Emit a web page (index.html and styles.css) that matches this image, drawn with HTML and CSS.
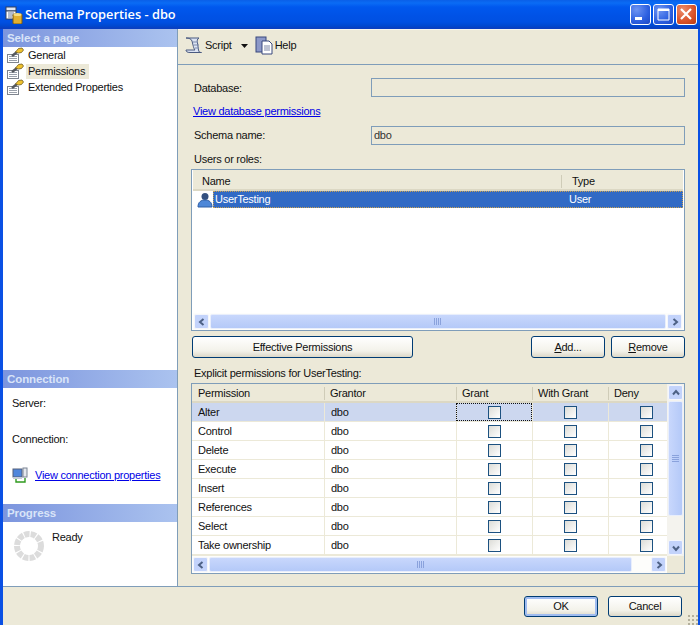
FILE: index.html
```html
<!DOCTYPE html>
<html lang="en">
<head>
<meta charset="utf-8">
<title>Schema Properties - dbo</title>
<link rel="stylesheet" href="styles.css">
</head>
<body>
<div class="window">
  <header class="titlebar">
    <svg class="app-icon" width="18" height="18" viewBox="0 0 18 18"><rect x="1" y="1" width="10" height="4" fill="#dfe7f5" stroke="#33415c"/><rect x="1" y="5" width="10" height="8" fill="#fff" stroke="#33415c"/><path d="M3 7h6M3 9h6M3 11h4" stroke="#6a7a9a"/><rect x="8" y="8" width="9" height="10" rx="1" fill="#e2b030" stroke="#7a5a10"/><ellipse cx="12.500" cy="8.500" rx="4" ry="1.500" fill="#f6dd80"/></svg>
    <span class="title-text">Schema Properties - dbo</span>
    <div class="caption-buttons">
      <span class="cap cap-blue"><svg width="21" height="21" viewBox="0 0 21 21"><rect x="5" y="13" width="7" height="3" fill="#fff"/></svg></span>
      <span class="cap cap-blue"><svg width="21" height="21" viewBox="0 0 21 21"><path d="M5 5h11v11H5z" fill="none" stroke="#fff"/><rect x="5" y="5" width="11" height="2" fill="#fff"/></svg></span>
      <span class="cap cap-red"><svg width="21" height="21" viewBox="0 0 21 21"><path d="M5 5l10 10M15 5L5 15" stroke="#fff" stroke-width="2.200"/></svg></span>
    </div>
  </header>

  <div class="frame">
    <div class="panes">
      <aside class="sidebar">
        <h2 class="side-head">Select a page</h2>
        <ul class="nav">
          <li class="nav-item"><svg class="page-icon" width="18" height="16" viewBox="0 0 18 16"><use href="#wrench-page"/></svg><span class="nav-label">General</span></li>
          <li class="nav-item"><svg class="page-icon" width="18" height="16" viewBox="0 0 18 16"><use href="#wrench-page"/></svg><span class="nav-label nav-active">Permissions</span></li>
          <li class="nav-item"><svg class="page-icon" width="18" height="16" viewBox="0 0 18 16"><use href="#wrench-page"/></svg><span class="nav-label">Extended Properties</span></li>
        </ul>
        <div class="side-spacer"></div>
        <h2 class="side-head">Connection</h2>
        <div class="conn">
          <div class="conn-line">Server:</div>
          <div class="conn-line conn-second">Connection:</div>
          <div class="conn-link">
            <svg width="16" height="16" viewBox="0 0 16 16"><rect x="1" y="2" width="9" height="8" fill="#4f86dc" stroke="#55617a"/><rect x="1" y="10" width="9" height="2" fill="#c5ccd8"/><rect x="11" y="1" width="4" height="9" fill="#e6e9ee" stroke="#7b8494"/><path d="M4 12v3h9v-4" fill="none" stroke="#2f9a1e" stroke-width="1.400"/></svg>
            <a class="link" href="#">View connection properties</a>
          </div>
        </div>
        <h2 class="side-head">Progress</h2>
        <div class="progress">
          <svg width="32" height="32" viewBox="0 0 32 32" class="spinner">
            <circle cx="16" cy="16" r="12" fill="none" stroke="#dcdcdc" stroke-width="6" stroke-dasharray="5.300 1.130"/>
          </svg>
          <span class="ready">Ready</span>
        </div>
      </aside>

      <main class="main">
        <div class="toolbar">
          <span class="tool">
            <svg width="18" height="20" viewBox="0 0 18 20"><path d="M1 2h13c-2 1-2 3-1.500 5l1 7c.3 2 1.500 2.500 3 2.500H5c-3 0-4-1-4-2.500h9c-1-1-1.500-3-2-5L7 5C6.500 3 4 2 1 2z" fill="#dbe3f2" stroke="#4a5a80"/><path d="M8 6h5M9 9h5M10 12h4" stroke="#7c8bad"/></svg>
            <span>Script</span>
          </span>
          <svg class="caret" width="7" height="4" viewBox="0 0 7 4"><path d="M0 0h7L3.500 4z" fill="#111"/></svg>
          <span class="tool">
            <svg width="18" height="20" viewBox="0 0 18 20"><rect x="1" y="1" width="10" height="15" fill="#8c98c8" stroke="#39487c"/><path d="M7 5h7l3 3v10H7z" fill="#fff" stroke="#39487c"/><path d="M9 10h6M9 12h6M9 14h6" stroke="#7e88a8"/></svg>
            <span>Help</span>
          </span>
        </div>

        <div class="form">
          <div class="field">
            <label class="field-label db-label">Database:</label>
            <div class="textbox"></div>
          </div>
          <a class="link db-link" href="#">View database permissions</a>
          <div class="field schema-field">
            <label class="field-label">Schema name:</label>
            <div class="textbox">dbo</div>
          </div>
          <div class="section-label users-label">Users or roles:</div>

          <section class="list">
            <div class="list-head">
              <span class="lh-name">Name</span>
              <span class="lh-type">Type</span>
            </div>
            <div class="list-row">
              <svg class="user-icon" width="16" height="16" viewBox="0 0 16 16"><circle cx="8" cy="4.500" r="3.500" fill="#33507f"/><path d="M1 15c0-5 3-7 7-7s7 2 7 7z" fill="#4d87d8" stroke="#2f5ea5"/></svg>
              <span class="row-selected"><span class="rs-name">UserTesting</span><span class="rs-type">User</span></span>
            </div>
            <div class="list-fill"></div>
            <div class="hscroll">
              <span class="sb-btn"><svg width="8" height="8" viewBox="0 0 8 8"><path d="M5.500 1L2 4l3.500 3" fill="none" stroke="#4d6185" stroke-width="2"/></svg></span>
              <span class="sb-thumb"><span class="grip-h"></span></span>
              <span class="sb-btn"><svg width="8" height="8" viewBox="0 0 8 8"><path d="M2.500 1L6 4 2.500 7" fill="none" stroke="#4d6185" stroke-width="2"/></svg></span>
            </div>
          </section>

          <div class="list-actions">
            <button class="btn btn-effective" type="button">Effective Permissions</button>
            <div class="actions-right">
              <button class="btn btn-small" type="button"><u>A</u>dd...</button>
              <button class="btn btn-small" type="button"><u>R</u>emove</button>
            </div>
          </div>

          <div class="section-label explicit-label">Explicit permissions for UserTesting:</div>

          <section class="grid-box">
            <div class="grid-main">
              <div class="grid-cols grid-head">
                <span>Permission</span><span>Grantor</span><span>Grant</span><span>With Grant</span><span>Deny</span>
              </div>
              <div class="grid-cols grid-row row-current"><span>Alter</span><span>dbo</span><span class="cb-cell cb-focus"><i class="cb"></i></span><span class="cb-cell"><i class="cb"></i></span><span class="cb-cell"><i class="cb"></i></span></div>
              <div class="grid-cols grid-row"><span>Control</span><span>dbo</span><span class="cb-cell"><i class="cb"></i></span><span class="cb-cell"><i class="cb"></i></span><span class="cb-cell"><i class="cb"></i></span></div>
              <div class="grid-cols grid-row"><span>Delete</span><span>dbo</span><span class="cb-cell"><i class="cb"></i></span><span class="cb-cell"><i class="cb"></i></span><span class="cb-cell"><i class="cb"></i></span></div>
              <div class="grid-cols grid-row"><span>Execute</span><span>dbo</span><span class="cb-cell"><i class="cb"></i></span><span class="cb-cell"><i class="cb"></i></span><span class="cb-cell"><i class="cb"></i></span></div>
              <div class="grid-cols grid-row"><span>Insert</span><span>dbo</span><span class="cb-cell"><i class="cb"></i></span><span class="cb-cell"><i class="cb"></i></span><span class="cb-cell"><i class="cb"></i></span></div>
              <div class="grid-cols grid-row"><span>References</span><span>dbo</span><span class="cb-cell"><i class="cb"></i></span><span class="cb-cell"><i class="cb"></i></span><span class="cb-cell"><i class="cb"></i></span></div>
              <div class="grid-cols grid-row"><span>Select</span><span>dbo</span><span class="cb-cell"><i class="cb"></i></span><span class="cb-cell"><i class="cb"></i></span><span class="cb-cell"><i class="cb"></i></span></div>
              <div class="grid-cols grid-row"><span>Take ownership</span><span>dbo</span><span class="cb-cell"><i class="cb"></i></span><span class="cb-cell"><i class="cb"></i></span><span class="cb-cell"><i class="cb"></i></span></div>
            </div>
            <div class="vscroll">
              <span class="sb-btn"><svg width="8" height="8" viewBox="0 0 8 8"><path d="M1 5.500L4 2l3 3.500" fill="none" stroke="#4d6185" stroke-width="2"/></svg></span>
              <span class="sb-thumb-v"><span class="grip-v"></span></span>
              <span class="sb-track-v"></span>
              <span class="sb-btn"><svg width="8" height="8" viewBox="0 0 8 8"><path d="M1 2.500L4 6l3-3.500" fill="none" stroke="#4d6185" stroke-width="2"/></svg></span>
            </div>
            <div class="hscroll hscroll-grid">
              <span class="sb-btn"><svg width="8" height="8" viewBox="0 0 8 8"><path d="M5.500 1L2 4l3.500 3" fill="none" stroke="#4d6185" stroke-width="2"/></svg></span>
              <span class="sb-thumb"><span class="grip-h"></span></span>
              <span class="sb-track-h"></span>
              <span class="sb-btn"><svg width="8" height="8" viewBox="0 0 8 8"><path d="M2.500 1L6 4 2.500 7" fill="none" stroke="#4d6185" stroke-width="2"/></svg></span>
            </div>
          </section>
        </div>
      </main>
    </div>

    <footer class="footer">
      <button class="btn btn-dialog btn-default" type="button">OK</button>
      <button class="btn btn-dialog" type="button">Cancel</button>
      <span class="size-grip"></span>
    </footer>
  </div>
</div>

<svg class="defs" width="0" height="0">
  <defs>
    <g id="wrench-page">
      <rect x="1.500" y="7.500" width="11" height="8" fill="#fff" stroke="#7e848e"/>
      <path d="M3 9.500h8M3 11.500h8M3 13.500h8" stroke="#9aa0aa"/>
      <path d="M6 9l5-4" stroke="#55585e" stroke-width="2.400"/>
      <path d="M9.500 5l3-3.500 3.500-.5 1.500 2-2 2.500-3 .5z" fill="#f0c22e" stroke="#6e5a1e" stroke-width=".8"/>
    </g>
  </defs>
</svg>
</body>
</html>
```
FILE: styles.css
```css
* { box-sizing: border-box; }
html, body { margin: 0; padding: 0; }
body { width: 700px; height: 625px; overflow: hidden; font: 11px/13px "Liberation Sans", Arial, sans-serif; letter-spacing: -0.25px; color: #111; background: #ece9d8; }
.defs { position: absolute; }
.window { display: flex; flex-direction: column; width: 700px; height: 625px; }

.titlebar { height: 29px; flex: none; display: flex; align-items: center; padding: 0 3px 1px 5px;
  background: linear-gradient(#0a5fe8 0, #0a6cf5 3px, #0058ee 7px, #0052e6 16px, #0050e2 22px, #0048cf 26px, #0a3fc0 28px); }
.app-icon { margin-right: 2px; margin-top: 2px; }
.title-text { color: #fff; font: 600 12.800px/16px "Open Sans", sans-serif; letter-spacing: 0; }
.caption-buttons { margin-left: auto; display: flex; gap: 2px; margin-top: 1px; }
.cap { width: 21px; height: 21px; border: 1px solid #fff; border-radius: 3px; display: block; overflow: hidden; }
.cap svg { display: block; margin: -1px; }
.cap-blue { background: radial-gradient(circle at 30% 25%, #6e94f2, #2c5fe0 60%, #1c47c4); }
.cap-red { background: radial-gradient(circle at 30% 25%, #ec8c6c, #d9522a 60%, #b83a12); }

.frame { flex: 1; min-height: 0; display: flex; flex-direction: column; border-left: 3px solid #0a50e4; border-right: 2px solid #0a50e4; background: #ece9d8; }
.panes { flex: none; height: 558px; display: flex; border-bottom: 1px solid #7f9db9; }

.sidebar { width: 175px; flex: none; display: flex; flex-direction: column; background: #fff; border-right: 1px solid #7f9db9; }
.side-head { flex: none; margin: 0; height: 18px; padding: 2px 4px; font: bold 11.500px/14px "Liberation Sans", sans-serif; letter-spacing: -0.1px; color: #d9e4f8; background: linear-gradient(90deg, #7c95de, #abc3ef); }
.nav { list-style: none; margin: 0; padding: 0 0 0 3px; }
.nav-item { display: flex; align-items: center; height: 16px; }
.page-icon { flex: none; margin-right: 3px; }
.nav-label { padding: 1px 4px 1px 1px; }
.nav-active { background: #ece9d8; padding-left: 2px; margin-left: -1px; }
.side-spacer { flex: 1; }
.conn { flex: none; height: 116px; padding: 9px 0 0 9px; }
.conn-second { margin-top: 23px; }
.conn-link { display: flex; align-items: center; gap: 7px; margin-top: 21px; }
.link { color: #0000e6; text-decoration: underline; }
.progress { flex: none; height: 64px; display: flex; padding: 8px 0 0 10px; }
.spinner { flex: none; margin-right: 7px; }
.ready { display: block; margin-top: 1px; }

.main { flex: 1; min-width: 0; display: flex; flex-direction: column; }
.toolbar { flex: none; height: 36px; display: flex; align-items: center; padding: 0 0 3px 7px; border-top: 1px solid #f8f6ee; border-bottom: 1px solid #7f9db9; }
.tool { display: inline-flex; align-items: center; gap: 2px; }
.caret { margin: 0 7px 0 9px; }
.form { flex: 1; padding: 13px 13px 0 13px; display: flex; flex-direction: column; }
.field { display: flex; align-items: center; height: 19px; padding-left: 3px; }
.field-label { width: 177px; flex: none; }
.db-label { padding-top: 2px; }
.textbox { flex: 1; height: 19px; border: 1px solid #7f9db9; padding: 2px; background: #ece9d8; color: #333; }
.db-link { margin-top: 8px; margin-left: 2px; height: 13px; display: block; }
.schema-field { margin-top: 8px; }
.section-label { height: 13px; flex: none; padding-left: 3px; }
.users-label { margin-top: 8px; }

.list { flex: none; height: 162px; margin-top: 3px; display: flex; flex-direction: column; border: 1px solid #7f9db9; background: #fff; padding: 0 1px; }
.list-head { flex: none; height: 21px; display: flex; align-items: center; border-bottom: 2px solid #dcd8c4; background: #ece9d8; padding-top: 4px; }
.lh-name { width: 368px; padding-left: 9px; }
.lh-type { padding-left: 10px; border-left: 1px solid #cfccb8; }
.list-row { flex: none; height: 17px; display: flex; align-items: center; padding-left: 4px; }
.user-icon { flex: none; }
.row-selected { flex: 1; height: 17px; display: flex; align-items: center; background: #316ac5; color: #fff; outline: 1px dotted #c8a050; outline-offset: -1px; padding-left: 2px; }
.rs-name { width: 354px; }
.list-fill { flex: 1; }

.hscroll { flex: none; display: flex; height: 17px; gap: 1px; background: #fdfdfb; padding: 1px; }
.sb-btn { flex: none; width: 15px; height: 15px; display: flex; align-items: center; justify-content: center; border: 1px solid #f4f6fc; border-radius: 2px; background: #c3d3fb; }
.sb-thumb { flex: 1; display: flex; align-items: center; justify-content: center; background: linear-gradient(#c8d7fc, #b4c9f8); border: 1px solid #e8eefc; border-radius: 2px; }
.grip-h { width: 8px; height: 7px; background: repeating-linear-gradient(90deg, #8aa2dc 0 1px, transparent 1px 2px); }

.list-actions { flex: none; display: flex; justify-content: space-between; margin-top: 5px; height: 22px; }
.btn { font: 11px/13px "Liberation Sans", sans-serif; letter-spacing: -0.25px; color: #111; border: 1px solid #003c74; border-radius: 3px; background: linear-gradient(#fff, #f3f2ea 70%, #dcd8c8); padding: 0; }
.btn-effective { width: 221px; margin-left: 1px; }
.actions-right { display: flex; gap: 6px; }
.btn-small { width: 74px; }
.explicit-label { margin-top: 9px; }

.grid-box { flex: none; height: 191px; margin-top: 3px; display: grid; grid-template-columns: 1fr 17px; grid-template-rows: 172px 17px; border: 1px solid #7f9db9; background: #ece9d8; }
.grid-main { min-width: 0; overflow: hidden; }
.grid-cols { display: grid; grid-template-columns: 132px 132px 76px 76px 76px; }
.grid-head { height: 19px; align-items: center; border-bottom: 2px solid #dcd8c4; padding-top: 1px; }
.grid-head span { padding-left: 5px; border-left: 1px solid #cfccb8; height: 13px; }
.grid-head span:first-child { border-left: 0; padding-left: 6px; }
.grid-row { height: 19px; background: #fff; border-bottom: 1px solid #ece9d8; }
.grid-row > span { display: flex; align-items: center; padding-left: 6px; border-left: 1px solid #ece9d8; }
.grid-row > span:first-child { border-left: 0; }
.row-current { background: #ccd7ef; }
.grid-row > .cb-cell { justify-content: center; padding-left: 0; }
.cb-focus { outline: 1px dotted #111; outline-offset: -1px; }
.cb { display: block; width: 13px; height: 13px; border: 1px solid #1c5180; background: linear-gradient(135deg, #dcdcd7, #fff); }

.vscroll { display: flex; flex-direction: column; grid-row: 1; grid-column: 2; gap: 1px; padding: 1px; background: #f4f3ee; }
.vscroll .sb-btn { height: 15px; }
.sb-thumb-v { flex: 1 1 112px; display: flex; align-items: center; justify-content: center; background: linear-gradient(90deg, #c8d7fc, #b4c9f8); border: 1px solid #e8eefc; border-radius: 2px; }
.grip-v { width: 7px; height: 8px; background: repeating-linear-gradient(#8aa2dc 0 1px, transparent 1px 2px); }
.sb-track-v { flex: 0 0 22px; }
.hscroll-grid { grid-row: 2; grid-column: 1 / 2; }
.sb-track-h { flex: 0 0 17px; }

.footer { flex: 1; position: relative; display: flex; justify-content: flex-end; align-items: flex-start; gap: 10px; padding: 9px 16px 0 0; }
.btn-dialog { width: 74px; height: 21px; }
.btn-default { box-shadow: inset 0 0 0 2px #a0bcf0; }
.size-grip { position: absolute; right: 0; bottom: 0; width: 11px; height: 11px; background: radial-gradient(circle, #b4b09c 1px, transparent 1.2px) 0 0 / 4px 4px; }
```
